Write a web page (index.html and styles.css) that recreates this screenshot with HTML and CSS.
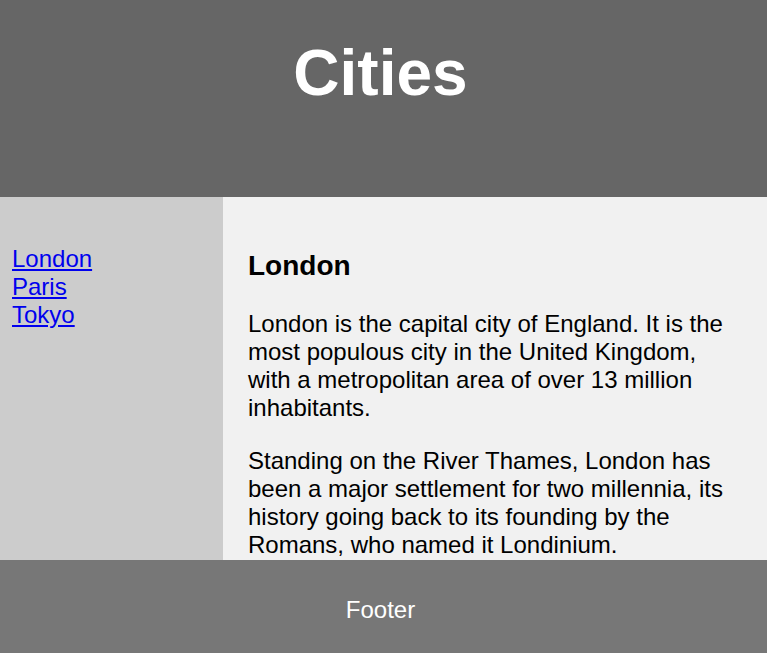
FILE: index.html
```html
<!DOCTYPE html>
<html lang="en">
<head>
<meta charset="utf-8">
<title>Cities</title>
<link rel="stylesheet" href="styles.css">
</head>
<body>
<header class="site-header">
  <h1 class="site-title">Cities</h1>
</header>
<section class="main">
  <nav class="side-nav">
    <ul class="nav-list">
      <li><a href="#">London</a></li>
      <li><a href="#">Paris</a></li>
      <li><a href="#">Tokyo</a></li>
    </ul>
  </nav>
  <article class="content">
    <h3 class="content-title">London</h3>
    <p class="content-text">London is the capital city of England. It is the most populous city in the United Kingdom, with a metropolitan area of over 13 million inhabitants.</p>
    <p class="content-text">Standing on the River Thames, London has been a major settlement for two millennia, its history going back to its founding by the Romans, who named it Londinium.</p>
  </article>
</section>
<footer class="site-footer">
  <p class="footer-text">Footer</p>
</footer>
</body>
</html>
```
FILE: styles.css
```css
* { box-sizing: border-box; }

html, body {
  margin: 0;
  padding: 0;
}

body {
  font-family: "Liberation Sans", Arial, Helvetica, sans-serif;
  font-size: 24px;
  color: #000;
  width: 767px;
  height: 653px;
  overflow: hidden;
  display: flex;
  flex-direction: column;
}

.site-header {
  background-color: #666;
  height: 197px;
  padding: 36px 6px 0 0;
  text-align: center;
  color: #fff;
  flex: none;
}

.site-title {
  margin: 0;
  font-size: 64px;
  font-weight: bold;
  line-height: 74px;
}

.main {
  display: flex;
  flex: 1;
  min-height: 0;
}

.side-nav {
  width: 223px;
  flex: none;
  background: #ccc;
  padding: 48px 12px 0 12px;
}

.nav-list {
  list-style: none;
  margin: 0;
  padding: 0;
}

.nav-list a {
  color: #0000ee;
  text-decoration: underline;
}

.content {
  flex: 1;
  background-color: #f1f1f1;
  padding: 25px 25px 0 25px;
  overflow: hidden;
}

.content-title {
  font-size: 28px;
  font-weight: bold;
  margin: 28px 0 28px 0;
}

.content-text {
  margin: 0 0 25px 0;
}

.site-footer {
  background-color: #777;
  height: 93px;
  flex: none;
  padding: 36px 6px 0 0;
  text-align: center;
  color: #fff;
}

.footer-text {
  margin: 0;
}
```
